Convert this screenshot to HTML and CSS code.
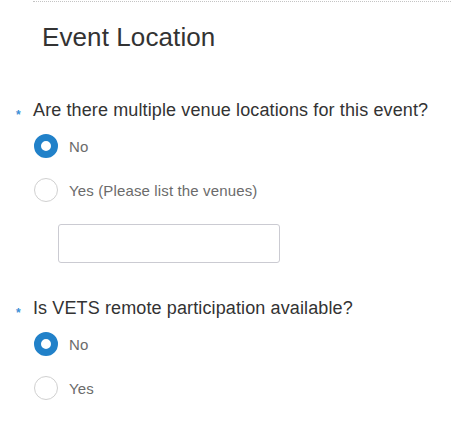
FILE: index.html
```html
<!DOCTYPE html>
<html>
<head>
<meta charset="utf-8">
<link rel="stylesheet" href="styles.css">
</head>
<body>
<div class="form">
  <h2 class="title">Event Location</h2>

  <div class="question"><span class="req">*</span>Are there multiple venue locations for this event?</div>
  <div class="options">
    <label class="option"><span class="radio checked"></span><span class="label">No</span></label>
    <label class="option"><span class="radio"></span><span class="label">Yes (Please list the venues)</span></label>
  </div>
  <div class="input"></div>

  <div class="question q2"><span class="req">*</span>Is VETS remote participation available?</div>
  <div class="options">
    <label class="option"><span class="radio checked"></span><span class="label">No</span></label>
    <label class="option"><span class="radio"></span><span class="label">Yes</span></label>
  </div>
</div>
</body>
</html>
```

FILE: styles.css
```css
html, body {
  margin: 0;
  padding: 0;
  background: #fff;
}
body {
  font-family: "Liberation Sans", Arial, sans-serif;
  width: 451px;
  height: 435px;
  overflow: hidden;
}
.form {
  margin-top: 1px;
  margin-left: 33px;
  border-top: 1px dotted #c4c4c4;
}
.title {
  margin: 20px 0 0 0;
  padding-left: 9px;
  font-size: 26px;
  font-weight: normal;
  line-height: 30px;
  letter-spacing: 0.1px;
  color: #333;
}
.question {
  position: relative;
  margin-top: 47px;
  font-size: 18px;
  line-height: 22px;
  letter-spacing: 0.12px;
  color: #333;
}
.question.q2 {
  margin-top: 34px;
}
.req {
  position: absolute;
  left: -17px;
  top: 10px;
  font-size: 12px;
  line-height: 12px;
  font-weight: bold;
  color: #3b8fd6;
}
.options {
  margin-top: 3px;
  display: flex;
  flex-direction: column;
}
.option {
  display: flex;
  align-items: center;
  height: 44px;
  padding-left: 1px;
}
.radio {
  box-sizing: border-box;
  width: 24px;
  height: 24px;
  border-radius: 50%;
  border: 1px solid #d0d0d0;
  background: #fff;
  flex: none;
}
.radio.checked {
  border: 7.5px solid #2181c9;
  background: #fff;
}
.label {
  margin-left: 11px;
  font-size: 15px;
  letter-spacing: 0.14px;
  color: #6b6b6b;
}
.input {
  box-sizing: border-box;
  margin-top: 12px;
  margin-left: 25px;
  width: 222px;
  height: 39px;
  border: 1px solid #cbcbd2;
  border-radius: 3px;
  background: #fff;
}
```
